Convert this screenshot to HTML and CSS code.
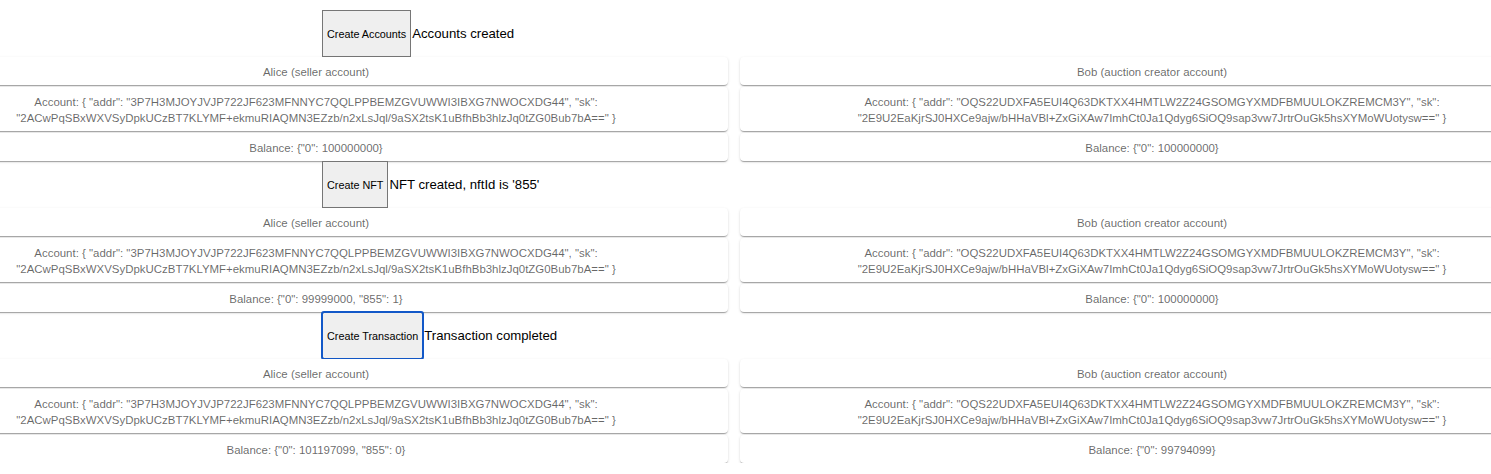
FILE: index.html
```html
<!DOCTYPE html>
<html lang="en">
<head>
<meta charset="utf-8">
<title>Auction demo</title>
<link rel="stylesheet" href="styles.css">
</head>
<body>
<main class="page">
  <section class="step">
    <div class="action"><button class="btn">Create Accounts</button><span class="status">Accounts created</span></div>
    <div class="accounts">
      <div class="account">
        <div class="paper">Alice (seller account)</div>
        <div class="paper">Account: { "addr": "3P7H3MJOYJVJP722JF623MFNNYC7QQLPPBEMZGVUWWI3IBXG7NWOCXDG44", "sk": "2ACwPqSBxWXVSyDpkUCzBT7KLYMF+ekmuRIAQMN3EZzb/n2xLsJql/9aSX2tsK1uBfhBb3hlzJq0tZG0Bub7bA==" }</div>
        <div class="paper">Balance: {"0": 100000000}</div>
      </div>
      <div class="account">
        <div class="paper">Bob (auction creator account)</div>
        <div class="paper">Account: { "addr": "OQS22UDXFA5EUI4Q63DKTXX4HMTLW2Z24GSOMGYXMDFBMUULOKZREMCM3Y", "sk": "2E9U2EaKjrSJ0HXCe9ajw/bHHaVBl+ZxGiXAw7ImhCt0Ja1Qdyg6SiOQ9sap3vw7JrtrOuGk5hsXYMoWUotysw==" }</div>
        <div class="paper">Balance: {"0": 100000000}</div>
      </div>
    </div>
  </section>
  <section class="step">
    <div class="action"><button class="btn">Create NFT</button><span class="status">NFT created, nftId is '855'</span></div>
    <div class="accounts">
      <div class="account">
        <div class="paper">Alice (seller account)</div>
        <div class="paper">Account: { "addr": "3P7H3MJOYJVJP722JF623MFNNYC7QQLPPBEMZGVUWWI3IBXG7NWOCXDG44", "sk": "2ACwPqSBxWXVSyDpkUCzBT7KLYMF+ekmuRIAQMN3EZzb/n2xLsJql/9aSX2tsK1uBfhBb3hlzJq0tZG0Bub7bA==" }</div>
        <div class="paper">Balance: {"0": 99999000, "855": 1}</div>
      </div>
      <div class="account">
        <div class="paper">Bob (auction creator account)</div>
        <div class="paper">Account: { "addr": "OQS22UDXFA5EUI4Q63DKTXX4HMTLW2Z24GSOMGYXMDFBMUULOKZREMCM3Y", "sk": "2E9U2EaKjrSJ0HXCe9ajw/bHHaVBl+ZxGiXAw7ImhCt0Ja1Qdyg6SiOQ9sap3vw7JrtrOuGk5hsXYMoWUotysw==" }</div>
        <div class="paper">Balance: {"0": 100000000}</div>
      </div>
    </div>
  </section>
  <section class="step">
    <div class="action"><button class="btn btn-focused">Create Transaction</button><span class="status">Transaction completed</span></div>
    <div class="accounts">
      <div class="account">
        <div class="paper">Alice (seller account)</div>
        <div class="paper">Account: { "addr": "3P7H3MJOYJVJP722JF623MFNNYC7QQLPPBEMZGVUWWI3IBXG7NWOCXDG44", "sk": "2ACwPqSBxWXVSyDpkUCzBT7KLYMF+ekmuRIAQMN3EZzb/n2xLsJql/9aSX2tsK1uBfhBb3hlzJq0tZG0Bub7bA==" }</div>
        <div class="paper">Balance: {"0": 101197099, "855": 0}</div>
      </div>
      <div class="account">
        <div class="paper">Bob (auction creator account)</div>
        <div class="paper">Account: { "addr": "OQS22UDXFA5EUI4Q63DKTXX4HMTLW2Z24GSOMGYXMDFBMUULOKZREMCM3Y", "sk": "2E9U2EaKjrSJ0HXCe9ajw/bHHaVBl+ZxGiXAw7ImhCt0Ja1Qdyg6SiOQ9sap3vw7JrtrOuGk5hsXYMoWUotysw==" }</div>
        <div class="paper">Balance: {"0": 99794099}</div>
      </div>
    </div>
  </section>
</main>
</body>
</html>
```

FILE: styles.css
```css
html, body {
  margin: 0;
  background: #fff;
}
body {
  overflow: hidden;
  font-family: "Liberation Sans", Arial, Helvetica, sans-serif;
  color: #000;
}
.page {
  margin-left: -96px;
  width: 1660px;
  padding-top: 10px;
}
.action {
  display: flex;
  align-items: center;
  height: 47px;
  padding-left: 418px;
}
.btn {
  height: 47px;
  padding: 0 4px;
  margin: 0;
  background: #efefef;
  border: 1px solid #767676;
  border-radius: 0;
  font-family: "Liberation Sans", Arial, sans-serif;
  font-size: 10.8px;
  color: #000;
}
.btn-focused {
  outline: 2px solid #1258c8;
  outline-offset: -1px;
  border-radius: 2px;
}
.status {
  font-size: 13.2px;
  padding-left: 1px;
}
.accounts {
  display: grid;
  grid-template-columns: 824px 824px;
  column-gap: 12px;
}
.account {
  display: flex;
  flex-direction: column;
  gap: 2px;
}
.paper {
  background: #fff;
  border-radius: 4px;
  box-shadow: 0 2px 1px -1px rgba(0,0,0,0.2), 0 1px 1px 0 rgba(0,0,0,0.14), 0 1px 3px 0 rgba(0,0,0,0.12);
  text-align: center;
  color: rgba(0,0,0,0.6);
  font-size: 11.45px;
  line-height: 16px;
  padding: 7px 16px 5px;
}
```
